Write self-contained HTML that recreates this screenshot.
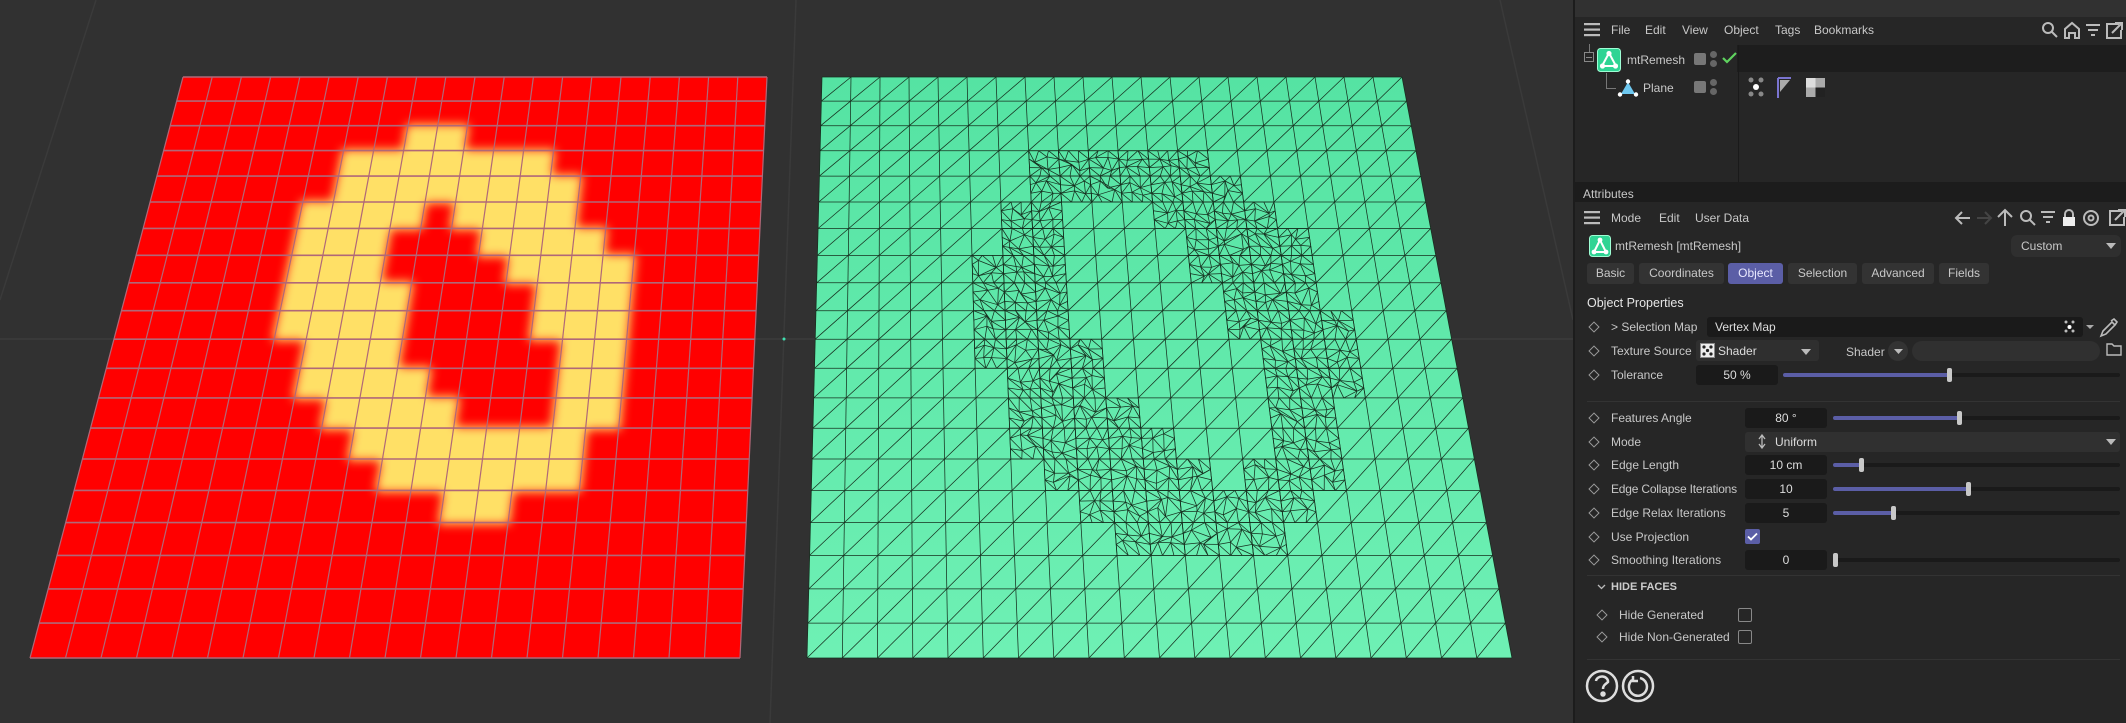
<!DOCTYPE html>
<html><head><meta charset="utf-8">
<style>
*{margin:0;padding:0;box-sizing:border-box}
body{width:2126px;height:723px;overflow:hidden;background:#313131;font-family:"Liberation Sans",sans-serif;color:#c8c8c8;font-size:12px;position:relative}
.a{position:absolute;white-space:nowrap}
#panel{position:absolute;left:1573px;top:0;width:553px;height:723px;background:#262626;border-left:2px solid #1c1c1c}
.t{position:absolute;white-space:nowrap;line-height:16px}
.dia{position:absolute;width:8px;height:8px;border:1.3px solid #9a9a9a;transform:rotate(45deg)}
.fld{position:absolute;background:#1a1a1a;border-radius:3px;height:20px;text-align:center;line-height:20px;color:#ddd}
.sl{position:absolute;height:4px;background:#1a1a1a;border-radius:2px}
.sl i{position:absolute;left:0;top:0;height:4px;background:#5b5ea6;border-radius:2px}
.sl b{position:absolute;top:-5px;width:5px;height:14px;background:#c8c8c8;border-radius:2px}
.tab{position:absolute;top:263px;height:21px;background:#333;border-radius:3px;line-height:21px;text-align:center;color:#c8c8c8}
.cb{position:absolute;width:14px;height:14px;border:1.5px solid #888;border-radius:2px}
</style></head><body>
<svg id="vp" class="a" style="left:0;top:0" width="1573" height="723">
<defs><filter id="bl" x="-20%" y="-20%" width="140%" height="140%"><feGaussianBlur stdDeviation="5"/></filter>
<clipPath id="rc"><polygon points="183,77 767,77 740,658 30,658"/></clipPath></defs>
<line x1="0" y1="339" x2="1573" y2="339" stroke="#3c3c3c" stroke-width="1.5"/>
<line x1="96" y1="0" x2="0" y2="300" stroke="#3a3a3a" stroke-width="1.5"/>
<line x1="796" y1="0" x2="770" y2="723" stroke="#3a3a3a" stroke-width="1.5"/>
<line x1="1500" y1="0" x2="1573" y2="320" stroke="#3a3a3a" stroke-width="1.5"/>
<g id="red"></g><g id="grn"></g>
<circle cx="784" cy="339" r="1.5" fill="#3fe0b0"/>
</svg>

<div id="panel">
<div class="a" style="left:0;top:0;width:553px;height:17px;background:#313131"></div>
<svg class="a" style="left:9px;top:22px" width="18" height="16"><rect y="1" width="16" height="2.2" fill="#bbb"/><rect y="6.5" width="16" height="2.2" fill="#bbb"/><rect y="12" width="16" height="2.2" fill="#bbb"/></svg>
<div class="t" style="left:36px;top:22px">File</div><div class="t" style="left:70px;top:22px">Edit</div><div class="t" style="left:107px;top:22px">View</div><div class="t" style="left:149px;top:22px">Object</div><div class="t" style="left:200px;top:22px">Tags</div><div class="t" style="left:239px;top:22px">Bookmarks</div>
<svg class="a" style="left:465px;top:20px" width="85" height="20" fill="none" stroke="#bbb" stroke-width="2"><circle cx="8" cy="8" r="5"/><path d="M12 12l5 5"/><path d="M25 18V9l7-6 7 6v9h-4v-5h-6v5z"/><path d="M46 5h14M48 10h10M51 15h4"/><path d="M79 4h-12v14h14V10M72 13l9-9M75 3h7v7"/></svg>
<div class="a" style="left:162px;top:45px;width:390px;height:27px;background:#1d1d1d"></div>
<div class="a" style="left:163px;top:45px;width:1px;height:137px;background:#1a1a1a"></div>
<div class="a" style="left:9px;top:52px;width:10px;height:10px;border:1px solid #888"></div><div class="a" style="left:11px;top:56.5px;width:6px;height:1px;background:#888"></div>
<div class="a" style="left:14px;top:44px;width:1px;height:8px;background:#777"></div>
<div class="a" style="left:31px;top:73px;width:1px;height:16px;background:#777"></div><div class="a" style="left:31px;top:88px;width:10px;height:1px;background:#777"></div>
<svg class="a" style="left:22px;top:48px" width="24" height="24"><rect x="0.5" y="0.5" width="23" height="23" rx="3" fill="#2fd494" stroke="#9effd5"/><path d="M12 5L5 18h14z" fill="none" stroke="#fff" stroke-width="2"/><circle cx="12" cy="5.5" r="2.6" fill="#fff"/><circle cx="5.5" cy="18" r="2.6" fill="#fff"/><circle cx="18.5" cy="18" r="2.6" fill="#fff"/></svg>
<div class="t" style="left:52px;top:52px">mtRemesh</div>
<div class="a" style="left:119px;top:53px;width:12px;height:12px;background:#777;border-radius:2px"></div><div class="a" style="left:135px;top:51px;width:7px;height:7px;background:#666;border-radius:50%"></div><div class="a" style="left:135px;top:60px;width:7px;height:7px;background:#666;border-radius:50%"></div>
<svg class="a" style="left:147px;top:52px" width="15" height="12"><path d="M1 6l4 4 9-9" fill="none" stroke="#5fd35f" stroke-width="2.2"/></svg>
<svg class="a" style="left:42px;top:78px" width="22" height="20"><path d="M11 4L4 16h14z" fill="#6ec8f0"/><circle cx="11" cy="3.5" r="2.2" fill="#fff"/><circle cx="3" cy="16.5" r="2.2" fill="#fff"/><circle cx="19" cy="16.5" r="2.2" fill="#fff"/></svg>
<div class="t" style="left:68px;top:80px">Plane</div>
<div class="a" style="left:119px;top:81px;width:12px;height:12px;background:#777;border-radius:2px"></div><div class="a" style="left:135px;top:79px;width:7px;height:7px;background:#666;border-radius:50%"></div><div class="a" style="left:135px;top:88px;width:7px;height:7px;background:#666;border-radius:50%"></div>
<svg class="a" style="left:172px;top:76px" width="80" height="22"><circle cx="4" cy="4" r="2.5" fill="#888"/><circle cx="14" cy="4" r="2.5" fill="#888"/><circle cx="9" cy="11" r="3" fill="#fff"/><circle cx="4" cy="18" r="2.5" fill="#888"/><circle cx="14" cy="18" r="2.5" fill="#888"/><path d="M31 2h13M31 2v20" stroke="#7a74d0" stroke-width="2"/><path d="M33 4h10l-10 12z" fill="#aaa"/><rect x="59" y="2" width="19" height="19" fill="#aaa"/><rect x="68.5" y="11.5" width="9.5" height="9.5" fill="#222"/><rect x="59" y="2" width="9.5" height="9.5" fill="#ddd"/></svg>
<div class="a" style="left:0;top:182px;width:553px;height:20px;background:#1c1c1c"></div>
<div class="t" style="left:8px;top:186px">Attributes</div>
<svg class="a" style="left:9px;top:210px" width="18" height="16"><rect y="1" width="16" height="2.2" fill="#bbb"/><rect y="6.5" width="16" height="2.2" fill="#bbb"/><rect y="12" width="16" height="2.2" fill="#bbb"/></svg>
<div class="t" style="left:36px;top:210px">Mode</div><div class="t" style="left:84px;top:210px">Edit</div><div class="t" style="left:120px;top:210px">User Data</div>
<svg class="a" style="left:378px;top:207px" width="175" height="22" fill="none" stroke="#bbb" stroke-width="2"><path d="M17 11H3M9 5l-6 6 6 6"/><path d="M24 11h14M32 5l6 6-6 6" stroke="#444"/><path d="M52 19V4M45 10l7-7 7 7"/><circle cx="73" cy="9" r="5"/><path d="M77 13l5 5"/><path d="M88 5h14M90 10h10M93 15h4"/><rect x="110" y="10" width="12" height="9" fill="#eee" stroke="none"/><path d="M112 10V7a4 4 0 018 0v3"/><circle cx="138" cy="11" r="7"/><circle cx="138" cy="11" r="2.5"/><path d="M169 4h-12v14h14V10M162 13l9-9M165 3h7v7"/></svg>
<svg class="a" style="left:14px;top:235px" width="22" height="22"><rect x="0.5" y="0.5" width="21" height="21" rx="3" fill="#2fd494" stroke="#9effd5"/><path d="M11 5L5 17h12z" fill="none" stroke="#fff" stroke-width="2"/><circle cx="11" cy="5" r="2.4" fill="#fff"/><circle cx="5" cy="17" r="2.4" fill="#fff"/><circle cx="17" cy="17" r="2.4" fill="#fff"/></svg>
<div class="t" style="left:40px;top:238px">mtRemesh [mtRemesh]</div>
<div class="a" style="left:436px;top:235px;width:110px;height:22px;background:#2f2f2f;border-radius:6px"></div>
<div class="t" style="left:446px;top:238px">Custom</div>
<svg class="a" style="left:531px;top:243px" width="10" height="7"><path d="M0 0h10L5 6z" fill="#bbb"/></svg>
<div class="tab" style="left:12px;width:47px">Basic</div>
<div class="tab" style="left:64px;width:85px">Coordinates</div>
<div class="tab" style="left:153px;width:55px;background:#5b5ea6;color:#e8e8ff">Object</div>
<div class="tab" style="left:213px;width:69px">Selection</div>
<div class="tab" style="left:287px;width:72px">Advanced</div>
<div class="tab" style="left:364px;width:50px">Fields</div>
<div class="t" style="left:12px;top:295px;color:#e6e6e6;font-size:12.5px">Object Properties</div>

<div class="dia" style="left:15px;top:323px"></div><div class="t" style="left:36px;top:319px">&gt; Selection Map</div>
<div class="a" style="left:132px;top:317px;width:376px;height:20px;background:#1a1a1a;border-radius:3px"></div>
<div class="t" style="left:140px;top:319px;color:#ddd">Vertex Map</div>
<svg class="a" style="left:488px;top:318px" width="64" height="20"><circle cx="3" cy="4" r="1.5" fill="#bbb"/><circle cx="10" cy="4" r="1.5" fill="#bbb"/><circle cx="6.5" cy="9" r="2" fill="#fff"/><circle cx="3" cy="13" r="1.5" fill="#bbb"/><circle cx="10" cy="13" r="1.5" fill="#bbb"/><path d="M23 7h8l-4 4z" fill="#aaa"/><path d="M38 18l2-5 9-9 3 3-9 9z M48 3l3-2 3 3-2 3" fill="none" stroke="#bbb" stroke-width="1.6"/></svg>
<div class="dia" style="left:15px;top:347px"></div><div class="t" style="left:36px;top:343px">Texture Source</div>
<div class="a" style="left:121px;top:340px;width:123px;height:21px;background:#2f2f2f;border-radius:3px"></div>
<svg class="a" style="left:125px;top:343px" width="15" height="15"><rect x="0.5" y="0.5" width="14" height="14" fill="#eee" stroke="#888"/><circle cx="4" cy="4" r="1.6" fill="#222"/><circle cx="11" cy="4" r="1.6" fill="#222"/><circle cx="7.5" cy="7.5" r="1.6" fill="#222"/><circle cx="4" cy="11" r="1.6" fill="#222"/><circle cx="11" cy="11" r="1.6" fill="#222"/></svg>
<div class="t" style="left:143px;top:343px;color:#ddd">Shader</div>
<svg class="a" style="left:226px;top:349px" width="10" height="7"><path d="M0 0h10L5 6z" fill="#bbb"/></svg>
<div class="t" style="left:271px;top:344px">Shader</div>
<div class="a" style="left:313px;top:341px;width:20px;height:20px;background:#333;border-radius:50%"></div>
<svg class="a" style="left:319px;top:349px" width="9" height="6"><path d="M0 0h9L4.5 5z" fill="#bbb"/></svg>
<div class="a" style="left:337px;top:341px;width:188px;height:20px;background:#303030;border-radius:10px"></div>
<svg class="a" style="left:531px;top:342px" width="16" height="14"><path d="M1 2h5l2 2h7v9H1z" fill="none" stroke="#bbb" stroke-width="1.4"/></svg>
<div class="dia" style="left:15px;top:371px"></div><div class="t" style="left:36px;top:367px">Tolerance</div>
<div class="fld" style="left:121px;top:365px;width:82px">50 %</div>
<div class="sl" style="left:208px;top:373px;width:337px"><i style="width:167px"></i><b style="left:164px"></b></div>
<div class="a" style="left:12px;top:401px;width:533px;height:1px;background:#333"></div>

<div class="dia" style="left:15px;top:414px"></div><div class="t" style="left:36px;top:410px">Features Angle</div>
<div class="fld" style="left:170px;top:408px;width:82px">80 °</div>
<div class="sl" style="left:258px;top:416px;width:287px"><i style="width:126px"></i><b style="left:124px"></b></div>
<div class="dia" style="left:15px;top:438px"></div><div class="t" style="left:36px;top:434px">Mode</div>
<div class="a" style="left:170px;top:432px;width:375px;height:20px;background:#303030;border-radius:3px"></div>
<svg class="a" style="left:183px;top:434px" width="8" height="15"><path d="M4 1v13M1 5l3-4 3 4M1 10l3 4 3-4" fill="none" stroke="#bbb" stroke-width="1.3"/></svg>
<div class="t" style="left:200px;top:434px;color:#ddd">Uniform</div>
<svg class="a" style="left:531px;top:439px" width="10" height="7"><path d="M0 0h10L5 6z" fill="#bbb"/></svg>
<div class="dia" style="left:15px;top:461px"></div><div class="t" style="left:36px;top:457px">Edge Length</div>
<div class="fld" style="left:170px;top:455px;width:82px">10 cm</div>
<div class="sl" style="left:258px;top:463px;width:287px"><i style="width:28px"></i><b style="left:26px"></b></div>
<div class="dia" style="left:15px;top:485px"></div><div class="t" style="left:36px;top:481px;letter-spacing:-0.2px">Edge Collapse Iterations</div>
<div class="fld" style="left:170px;top:479px;width:82px">10</div>
<div class="sl" style="left:258px;top:487px;width:287px"><i style="width:135px"></i><b style="left:133px"></b></div>
<div class="dia" style="left:15px;top:509px"></div><div class="t" style="left:36px;top:505px">Edge Relax Iterations</div>
<div class="fld" style="left:170px;top:503px;width:82px">5</div>
<div class="sl" style="left:258px;top:511px;width:287px"><i style="width:60px"></i><b style="left:58px"></b></div>
<div class="dia" style="left:15px;top:533px"></div><div class="t" style="left:36px;top:529px">Use Projection</div>
<div class="a" style="left:170px;top:529px;width:15px;height:15px;background:#5b5ea6;border-radius:2px"></div>
<svg class="a" style="left:172px;top:532px" width="11" height="9"><path d="M1 4.5l3 3 6-6" fill="none" stroke="#fff" stroke-width="1.8"/></svg>
<div class="dia" style="left:15px;top:556px"></div><div class="t" style="left:36px;top:552px">Smoothing Iterations</div>
<div class="fld" style="left:170px;top:550px;width:82px">0</div>
<div class="sl" style="left:258px;top:558px;width:287px"><b style="left:0"></b></div>
<div class="a" style="left:12px;top:575px;width:533px;height:1px;background:#333"></div>
<svg class="a" style="left:22px;top:584px" width="9" height="6"><path d="M1 1l3.5 3.5L8 1" fill="none" stroke="#bbb" stroke-width="1.3"/></svg>
<div class="t" style="left:36px;top:579px;font-weight:bold;font-size:11px;color:#ccc">HIDE FACES</div>
<div class="dia" style="left:23px;top:611px"></div><div class="t" style="left:44px;top:607px">Hide Generated</div>
<div class="cb" style="left:163px;top:608px"></div>
<div class="dia" style="left:23px;top:633px"></div><div class="t" style="left:44px;top:629px">Hide Non-Generated</div>
<div class="cb" style="left:163px;top:630px"></div>
<div class="a" style="left:12px;top:659px;width:533px;height:1px;background:#333"></div>
<svg class="a" style="left:10px;top:669px" width="75" height="34" fill="none" stroke="#ddd" stroke-width="2.5"><circle cx="17" cy="17" r="15"/><path d="M11 12a6 5 0 1112 1c-2 2-5 3-5 7" /><circle cx="18" cy="25" r="1.5" fill="#ddd"/><circle cx="53" cy="17" r="15"/><path d="M47 11a9 9 0 1 0 8-2M48 7v5h5"/></svg>
</div>

<script>
function H(q){const[x0,y0]=q[0],[x1,y1]=q[1],[x2,y2]=q[2],[x3,y3]=q[3];
const dx1=x1-x2,dx2=x3-x2,dx3=x0-x1+x2-x3,dy1=y1-y2,dy2=y3-y2,dy3=y0-y1+y2-y3;
const den=dx1*dy2-dx2*dy1,g=(dx3*dy2-dx2*dy3)/den,h=(dx1*dy3-dx3*dy1)/den;
const a=x1-x0+g*x1,b=x3-x0+h*x3,c=x0,d=y1-y0+g*y1,e=y3-y0+h*y3,f=y0;
return(u,v)=>{const w=g*u+h*v+1;return[(a*u+b*v+c)/w,(d*u+e*v+f)/w];};}
const N=20;
function pts(m,l){return l.map(p=>{const r=m(p[0]/N,p[1]/N);return r[0].toFixed(1)+','+r[1].toFixed(1)}).join(' ');}
const s01=x=>Math.max(0,Math.min(1,x));
function ring(c,r){
const o=Math.hypot((c-(10.6+(r-9)*0.2))/5.9,(r-9)/7.3),i=Math.hypot((c-(11+(r-9.2)*0.4))/1.9,(r-9.4)/3.7);
return s01((1-o)*5)*s01((i-1)*4);}
function ringG(c,r){
const o=Math.hypot((c-(10.9+(r-9.8)*0.1))/6.2,(r-9.8)/8.0),i=Math.hypot((c-(11+(r-9.8)*0.35))/2.3,(r-9.8)/4.3);
return s01((1-o)*5)*s01((i-1)*4);}
(function(){const m=H([[183,77],[767,77],[740,658],[30,658]]);
let s=`<polygon points="${pts(m,[[0,0],[N,0],[N,N],[0,N]])}" fill="#ff0000"/>`;let y='';
for(let r=0;r<N;r++)for(let c=0;c<N;c++){const t=ring(c+0.5,r+0.5);
if(t>0.45)y+=`<polygon points="${pts(m,[[c-0.05,r-0.05],[c+1.05,r-0.05],[c+1.05,r+1.05],[c-0.05,r+1.05]])}"/>`;}
s+=`<g clip-path="url(#rc)"><g fill="#ffe066" filter="url(#bl)">${y}</g></g>`;
for(let k=0;k<=N;k++){s+=`<polyline points="${pts(m,[[k,0],[k,N]])}" stroke="#b06878" stroke-width="1.2" fill="none"/>`;
s+=`<polyline points="${pts(m,[[0,k],[N,k]])}" stroke="#b06878" stroke-width="1.6" fill="none"/>`;}
document.getElementById('red').innerHTML=s;})();
(function(){const m=H([[822,77],[1402,77],[1512,658],[807,658]]);
let s=`<defs><linearGradient id="gg" x1="0" y1="0" x2="0" y2="1"><stop offset="0" stop-color="#55e3a3"/><stop offset="1" stop-color="#6ef0b4"/></linearGradient></defs>`;
s+=`<polygon points="${pts(m,[[0,0],[N,0],[N,N],[0,N]])}" fill="url(#gg)"/>`;
let L='';const ln=(a,b)=>{L+=`<polyline points="${pts(m,[a,b])}"/>`;};
let rnd=7;const R=()=>{rnd=(rnd*16807)%2147483647;return rnd/2147483647;};
for(let r=0;r<N;r++)for(let c=0;c<N;c++){const t=ringG(c+0.5,r+0.5);
if(t>0.45){const n=3,P=[];for(let i=0;i<=n;i++){P[i]=[];for(let j=0;j<=n;j++){const ed=(i==0||j==0||i==n||j==n);
P[i][j]=[c+j/n+(ed?0:(R()-0.5)*0.3),r+i/n+(ed?0:(R()-0.5)*0.3)];}}
for(let i=0;i<=n;i++)for(let j=0;j<=n;j++){if(j<n)ln(P[i][j],P[i][j+1]);if(i<n)ln(P[i][j],P[i+1][j]);if(i<n&&j<n){if(R()<0.5)ln(P[i+1][j],P[i][j+1]);else ln(P[i][j],P[i+1][j+1]);}}}
else{ln([c,r+1],[c+1,r]);}}
for(let k=0;k<=N;k++){ln([k,0],[k,N]);ln([0,k],[N,k]);}
s+=`<g stroke="#16301f" stroke-width="0.75" fill="none">${L}</g>`;
document.getElementById('grn').innerHTML=s;})();
</script>
</body></html>
